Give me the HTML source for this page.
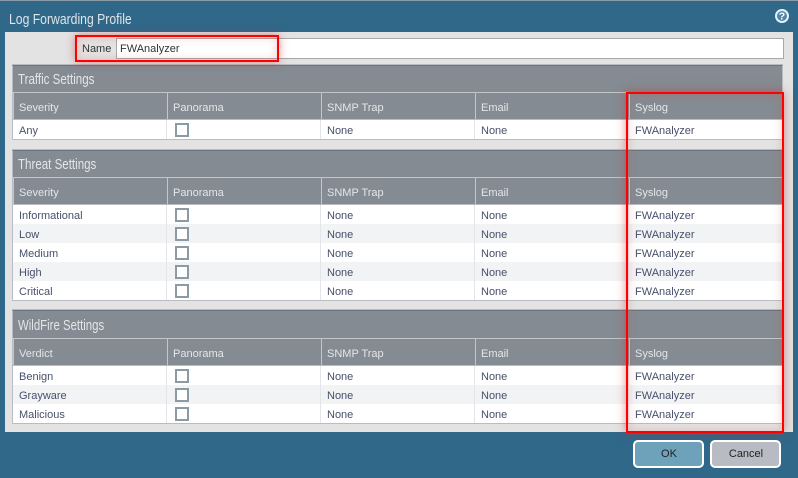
<!DOCTYPE html>
<html><head><meta charset="utf-8"><style>
html,body{margin:0;padding:0}
body{width:798px;height:478px;overflow:hidden;position:relative;background:#30688a;font:11px "Liberation Sans",sans-serif;color:#47506a}
div{position:absolute;box-sizing:border-box}
.t{white-space:nowrap;line-height:14px}
.title{white-space:nowrap;transform-origin:0 0;transform:scaleX(.77);color:#e3e6e8;font-size:15px;line-height:18px}
.sec{left:12px;width:771px;background:#848b92;border:1px solid #b9bdc3;border-top:1px solid #6d757c;box-shadow:0 -1px 0 #b9bdc3}
.hl{left:12px;width:771px;height:1px;background:#c3c7cb}
.body{left:12px;width:771px;background:#fff;border-left:1px solid #b9bdc3;border-right:1px solid #b9bdc3;border-bottom:1px solid #b9bdc3}
.alt{left:13px;width:769px;height:19px;background:#f2f3f5}
.sep{width:1px;background:#c3c7cb}
.sepb{width:1px;background:#e3e5e8}
.h{color:#e4e7ea}
.c{left:175px;width:14px;height:14px;border:2px solid #8c9aa4;background:#fff}
.red{border:2px solid #f00;box-shadow:0 0 9px rgba(200,40,40,.5),inset 0 0 9px rgba(230,60,60,.28)}
.btn{top:440px;height:28px;width:71px;border:2px solid #fff;border-radius:5px;text-align:center;line-height:25px;color:#222;font-size:11px;padding-left:1px}
</style></head><body>
<div style="left:0;top:0;width:798px;height:1px;background:#8a9ba8"></div>
<div class="title" style="left:9px;top:11px;transform:scaleX(.813);color:#dfe5e8">Log Forwarding Profile</div>
<svg style="position:absolute;left:774px;top:8px" width="18" height="18" viewBox="0 0 18 18"><circle cx="8" cy="8" r="6" fill="#4a88b0" stroke="#e8f0f4" stroke-width="2"/><text x="8" y="11.5" font-family="Liberation Sans" font-weight="bold" font-size="10.5" fill="#fff" text-anchor="middle">?</text></svg>

<div style="left:5px;top:32px;width:788px;height:400px;background:#e3e3e3"></div>

<div class="t" style="left:82px;top:42px;color:#333">Name</div>
<div style="left:116px;top:38px;width:668px;height:21px;background:#fff;border:1px solid #a8a8a8"></div>
<div class="t" style="left:120px;top:42px;color:#333">FWAnalyzer</div>

<!-- Traffic -->
<div class="sec" style="top:65px;height:55px"></div>
<div class="hl" style="top:92px"></div>
<div class="title" style="left:18px;top:71px">Traffic Settings</div>
<div class="sep" style="left:13px;top:93px;height:26px"></div>
<div class="sep" style="left:167px;top:93px;height:26px"></div>
<div class="sep" style="left:321px;top:93px;height:26px"></div>
<div class="sep" style="left:475px;top:93px;height:26px"></div>
<div class="sep" style="left:629px;top:93px;height:26px"></div>
<div class="t h" style="left:19px;top:101px">Severity</div>
<div class="t h" style="left:173px;top:101px">Panorama</div>
<div class="t h" style="left:327px;top:101px">SNMP Trap</div>
<div class="t h" style="left:481px;top:101px">Email</div>
<div class="t h" style="left:635px;top:101px">Syslog</div>
<div class="body" style="top:120px;height:20px"></div>
<div class="sepb" style="left:166px;top:120px;height:19px"></div>
<div class="sepb" style="left:320px;top:120px;height:19px"></div>
<div class="sepb" style="left:474px;top:120px;height:19px"></div>
<div class="sepb" style="left:628px;top:120px;height:19px"></div>
<div class="t" style="left:19px;top:124px">Any</div>
<div class="c" style="top:123px"></div>
<div class="t" style="left:327px;top:124px">None</div>
<div class="t" style="left:481px;top:124px">None</div>
<div class="t" style="left:635px;top:124px">FWAnalyzer</div>

<!-- Threat -->
<div class="sec" style="top:150px;height:55px"></div>
<div class="hl" style="top:177px"></div>
<div class="title" style="left:18px;top:156px">Threat Settings</div>
<div class="sep" style="left:13px;top:178px;height:26px"></div>
<div class="sep" style="left:167px;top:178px;height:26px"></div>
<div class="sep" style="left:321px;top:178px;height:26px"></div>
<div class="sep" style="left:475px;top:178px;height:26px"></div>
<div class="sep" style="left:629px;top:178px;height:26px"></div>
<div class="t h" style="left:19px;top:186px">Severity</div>
<div class="t h" style="left:173px;top:186px">Panorama</div>
<div class="t h" style="left:327px;top:186px">SNMP Trap</div>
<div class="t h" style="left:481px;top:186px">Email</div>
<div class="t h" style="left:635px;top:186px">Syslog</div>
<div class="body" style="top:205px;height:96px"></div>
<div class="alt" style="top:224px"></div>
<div class="alt" style="top:262px"></div>
<div class="sepb" style="left:166px;top:205px;height:95px"></div>
<div class="sepb" style="left:320px;top:205px;height:95px"></div>
<div class="sepb" style="left:474px;top:205px;height:95px"></div>
<div class="sepb" style="left:628px;top:205px;height:95px"></div>

<div class="t" style="left:19px;top:209px">Informational</div><div class="c" style="top:208px"></div>
<div class="t" style="left:327px;top:209px">None</div><div class="t" style="left:481px;top:209px">None</div><div class="t" style="left:635px;top:209px">FWAnalyzer</div>
<div class="t" style="left:19px;top:228px">Low</div><div class="c" style="top:227px"></div>
<div class="t" style="left:327px;top:228px">None</div><div class="t" style="left:481px;top:228px">None</div><div class="t" style="left:635px;top:228px">FWAnalyzer</div>
<div class="t" style="left:19px;top:247px">Medium</div><div class="c" style="top:246px"></div>
<div class="t" style="left:327px;top:247px">None</div><div class="t" style="left:481px;top:247px">None</div><div class="t" style="left:635px;top:247px">FWAnalyzer</div>
<div class="t" style="left:19px;top:266px">High</div><div class="c" style="top:265px"></div>
<div class="t" style="left:327px;top:266px">None</div><div class="t" style="left:481px;top:266px">None</div><div class="t" style="left:635px;top:266px">FWAnalyzer</div>
<div class="t" style="left:19px;top:285px">Critical</div><div class="c" style="top:284px"></div>
<div class="t" style="left:327px;top:285px">None</div><div class="t" style="left:481px;top:285px">None</div><div class="t" style="left:635px;top:285px">FWAnalyzer</div>

<!-- WildFire -->
<div class="sec" style="top:310px;height:56px"></div>
<div class="hl" style="top:338px"></div>
<div class="title" style="left:18px;top:317px;transform:scaleX(.76)">WildFire Settings</div>
<div class="sep" style="left:13px;top:339px;height:26px"></div>
<div class="sep" style="left:167px;top:339px;height:26px"></div>
<div class="sep" style="left:321px;top:339px;height:26px"></div>
<div class="sep" style="left:475px;top:339px;height:26px"></div>
<div class="sep" style="left:629px;top:339px;height:26px"></div>
<div class="t h" style="left:19px;top:347px">Verdict</div>
<div class="t h" style="left:173px;top:347px">Panorama</div>
<div class="t h" style="left:327px;top:347px">SNMP Trap</div>
<div class="t h" style="left:481px;top:347px">Email</div>
<div class="t h" style="left:635px;top:347px">Syslog</div>
<div class="body" style="top:366px;height:58px"></div>
<div class="alt" style="top:385px"></div>
<div class="sepb" style="left:166px;top:366px;height:57px"></div>
<div class="sepb" style="left:320px;top:366px;height:57px"></div>
<div class="sepb" style="left:474px;top:366px;height:57px"></div>
<div class="sepb" style="left:628px;top:366px;height:57px"></div>

<div class="t" style="left:19px;top:370px">Benign</div><div class="c" style="top:369px"></div>
<div class="t" style="left:327px;top:370px">None</div><div class="t" style="left:481px;top:370px">None</div><div class="t" style="left:635px;top:370px">FWAnalyzer</div>
<div class="t" style="left:19px;top:389px">Grayware</div><div class="c" style="top:388px"></div>
<div class="t" style="left:327px;top:389px">None</div><div class="t" style="left:481px;top:389px">None</div><div class="t" style="left:635px;top:389px">FWAnalyzer</div>
<div class="t" style="left:19px;top:408px">Malicious</div><div class="c" style="top:407px"></div>
<div class="t" style="left:327px;top:408px">None</div><div class="t" style="left:481px;top:408px">None</div><div class="t" style="left:635px;top:408px">FWAnalyzer</div>

<div class="red" style="left:75px;top:35px;width:204px;height:27px"></div>
<div class="red" style="left:626px;top:92px;width:158px;height:341px"></div>

<div class="btn" style="left:633px;background:#6da2ba">OK</div>
<div class="btn" style="left:710px;background:#b9bbc4">Cancel</div>
</body></html>
